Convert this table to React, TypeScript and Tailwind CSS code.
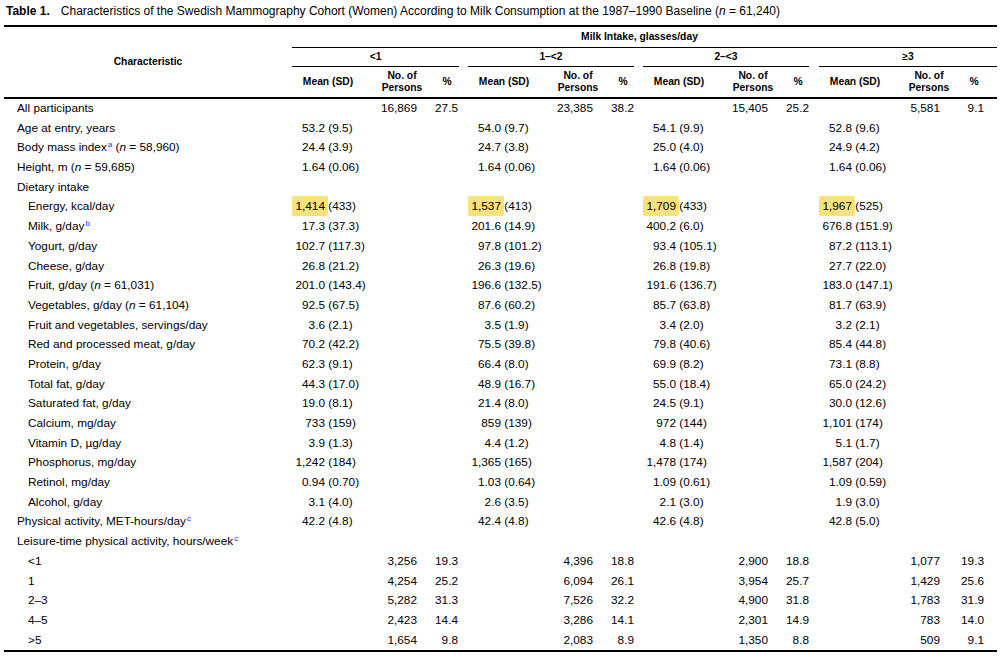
import React from "react";

type Row = {
  l: React.ReactNode;
  indent?: boolean;
  m?: [string, string][];
  c?: [string, string][];
  hl?: boolean;
};

const Sup = ({ children }: { children: React.ReactNode }) => (
  <sup className="text-[8px] text-[#2a2aff] ml-[1px]">{children}</sup>
);

const rows: Row[] = [
  { l: "All participants", c: [["16,869", "27.5"], ["23,385", "38.2"], ["15,405", "25.2"], ["5,581", "9.1"]] },
  { l: "Age at entry, years", m: [["53.2", "9.5"], ["54.0", "9.7"], ["54.1", "9.9"], ["52.8", "9.6"]] },
  {
    l: (
      <>
        Body mass index<Sup>a</Sup> (<i>n</i> = 58,960)
      </>
    ),
    m: [["24.4", "3.9"], ["24.7", "3.8"], ["25.0", "4.0"], ["24.9", "4.2"]],
  },
  {
    l: (
      <>
        Height, m (<i>n</i> = 59,685)
      </>
    ),
    m: [["1.64", "0.06"], ["1.64", "0.06"], ["1.64", "0.06"], ["1.64", "0.06"]],
  },
  { l: "Dietary intake" },
  { l: "Energy, kcal/day", indent: true, hl: true, m: [["1,414", "433"], ["1,537", "413"], ["1,709", "433"], ["1,967", "525"]] },
  {
    l: (
      <>
        Milk, g/day<Sup>b</Sup>
      </>
    ),
    indent: true,
    m: [["17.3", "37.3"], ["201.6", "14.9"], ["400.2", "6.0"], ["676.8", "151.9"]],
  },
  { l: "Yogurt, g/day", indent: true, m: [["102.7", "117.3"], ["97.8", "101.2"], ["93.4", "105.1"], ["87.2", "113.1"]] },
  { l: "Cheese, g/day", indent: true, m: [["26.8", "21.2"], ["26.3", "19.6"], ["26.8", "19.8"], ["27.7", "22.0"]] },
  {
    l: (
      <>
        Fruit, g/day (<i>n</i> = 61,031)
      </>
    ),
    indent: true,
    m: [["201.0", "143.4"], ["196.6", "132.5"], ["191.6", "136.7"], ["183.0", "147.1"]],
  },
  {
    l: (
      <>
        Vegetables, g/day (<i>n</i> = 61,104)
      </>
    ),
    indent: true,
    m: [["92.5", "67.5"], ["87.6", "60.2"], ["85.7", "63.8"], ["81.7", "63.9"]],
  },
  { l: "Fruit and vegetables, servings/day", indent: true, m: [["3.6", "2.1"], ["3.5", "1.9"], ["3.4", "2.0"], ["3.2", "2.1"]] },
  { l: "Red and processed meat, g/day", indent: true, m: [["70.2", "42.2"], ["75.5", "39.8"], ["79.8", "40.6"], ["85.4", "44.8"]] },
  { l: "Protein, g/day", indent: true, m: [["62.3", "9.1"], ["66.4", "8.0"], ["69.9", "8.2"], ["73.1", "8.8"]] },
  { l: "Total fat, g/day", indent: true, m: [["44.3", "17.0"], ["48.9", "16.7"], ["55.0", "18.4"], ["65.0", "24.2"]] },
  { l: "Saturated fat, g/day", indent: true, m: [["19.0", "8.1"], ["21.4", "8.0"], ["24.5", "9.1"], ["30.0", "12.6"]] },
  { l: "Calcium, mg/day", indent: true, m: [["733", "159"], ["859", "139"], ["972", "144"], ["1,101", "174"]] },
  { l: "Vitamin D, µg/day", indent: true, m: [["3.9", "1.3"], ["4.4", "1.2"], ["4.8", "1.4"], ["5.1", "1.7"]] },
  { l: "Phosphorus, mg/day", indent: true, m: [["1,242", "184"], ["1,365", "165"], ["1,478", "174"], ["1,587", "204"]] },
  { l: "Retinol, mg/day", indent: true, m: [["0.94", "0.70"], ["1.03", "0.64"], ["1.09", "0.61"], ["1.09", "0.59"]] },
  { l: "Alcohol, g/day", indent: true, m: [["3.1", "4.0"], ["2.6", "3.5"], ["2.1", "3.0"], ["1.9", "3.0"]] },
  {
    l: (
      <>
        Physical activity, MET-hours/day<Sup>c</Sup>
      </>
    ),
    m: [["42.2", "4.8"], ["42.4", "4.8"], ["42.6", "4.8"], ["42.8", "5.0"]],
  },
  {
    l: (
      <>
        Leisure-time physical activity, hours/week<Sup>c</Sup>
      </>
    ),
  },
  { l: "<1", indent: true, c: [["3,256", "19.3"], ["4,396", "18.8"], ["2,900", "18.8"], ["1,077", "19.3"]] },
  { l: "1", indent: true, c: [["4,254", "25.2"], ["6,094", "26.1"], ["3,954", "25.7"], ["1,429", "25.6"]] },
  { l: "2–3", indent: true, c: [["5,282", "31.3"], ["7,526", "32.2"], ["4,900", "31.8"], ["1,783", "31.9"]] },
  { l: "4–5", indent: true, c: [["2,423", "14.4"], ["3,286", "14.1"], ["2,301", "14.9"], ["783", "14.0"]] },
  { l: ">5", indent: true, c: [["1,654", "9.8"], ["2,083", "8.9"], ["1,350", "8.8"], ["509", "9.1"]] },
];

const groupW = ["w-[176px]", "w-[175px]", "w-[176px]", "w-[178px]"];
const countW = ["w-[45px]", "w-[45px]", "w-[45px]", "w-[41px]"];
const pctW = ["w-[41px]", "w-[41px]", "w-[41px]", "w-[44px]"];
const lineW = ["w-[167px]", "w-[166px]", "w-[166px]", "w-[178px]"];
const groupNames = ["<1", "1–<2", "2–<3", "≥3"];

export default function App() {
  return (
    <div
      className="w-[1001px] h-[658px] bg-white text-black overflow-hidden"
      style={{ fontFamily: '"Liberation Sans", Arial, sans-serif' }}
    >
      <div className="h-[25px] pt-[4px] pl-[6px] text-[12px] leading-[15px] whitespace-nowrap">
        <span className="font-bold">Table 1.</span>
        <span className="ml-[11px]">
          Characteristics of the Swedish Mammography Cohort (Women) According to Milk Consumption at the 1987–1990
          Baseline (<i>n</i> = 61,240)
        </span>
      </div>
      <div className="ml-[4px] w-[993px] border-t-2 border-b-2 border-black">
        {/* header */}
        <div className="flex h-[72px] border-b-2 border-black text-[10.3px] font-bold">
          <div className="w-[288px] flex items-center justify-center">Characteristic</div>
          <div className="flex flex-col">
            <div className="h-[21px] w-[705px] border-b border-black flex items-center justify-center pr-[10px]">
              Milk Intake, glasses/day
            </div>
            <div className="flex">
              {groupNames.map((g, gi) => (
                <div key={g} className={`${groupW[gi]} flex flex-col`}>
                  <div className={`${lineW[gi]} h-[19px] border-b border-black flex items-center justify-center`}>
                    {g}
                  </div>
                  <div className="flex h-[30px] items-center leading-[12.3px]">
                    <div className="w-[72px] text-center">Mean (SD)</div>
                    <div className="w-[76px] text-center">
                      No. of
                      <br />
                      Persons
                    </div>
                    <div className="w-[14px] text-center">%</div>
                  </div>
                </div>
              ))}
            </div>
          </div>
        </div>
        {/* body */}
        <div className="text-[11.8px]">
          {rows.map((r, ri) => (
            <div key={ri} className="flex h-[19.7px] items-center whitespace-nowrap">
              <div className={`w-[288px] ${r.indent ? "pl-[24px]" : "pl-[13px]"}`}>{r.l}</div>
              {[0, 1, 2, 3].map((gi) => (
                <div key={gi} className={`${groupW[gi]} flex`}>
                  <div className="w-[80px] flex">
                    {r.m ? (
                      <>
                        <span className="inline-block w-[33px] text-right">
                          {r.hl ? (
                            <span className="bg-[#f7e27c] px-[3px] -mx-[3px] py-[3px] rounded-[2px]">
                              {r.m[gi][0]}
                            </span>
                          ) : (
                            r.m[gi][0]
                          )}
                        </span>
                        <span>&nbsp;({r.m[gi][1]})</span>
                      </>
                    ) : null}
                  </div>
                  <div className={`${countW[gi]} text-right`}>{r.c ? r.c[gi][0] : ""}</div>
                  <div className={`${pctW[gi]} text-right`}>{r.c ? r.c[gi][1] : ""}</div>
                </div>
              ))}
            </div>
          ))}
        </div>
      </div>
    </div>
  );
}
